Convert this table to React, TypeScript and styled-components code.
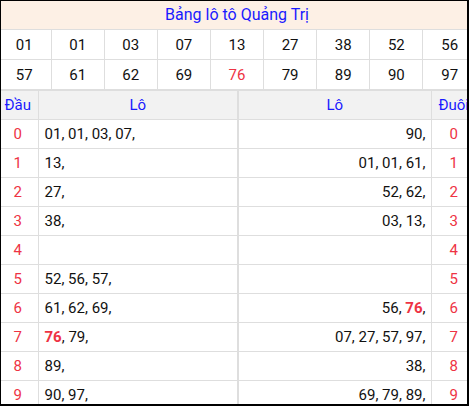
import React from 'react';
import styled, { createGlobalStyle } from 'styled-components';

const GlobalStyle = createGlobalStyle`
  html, body {
    margin: 0;
    padding: 0;
    background: #fff;
  }
  body {
    font-family: Roboto, 'Liberation Sans', Arial, sans-serif;
  }
`;

const prizes = [
  ['01', '01', '03', '07', '13', '27', '38', '52', '56'],
  ['57', '61', '62', '69', '76', '79', '89', '90', '97'],
];

const special = '76';

const heads: string[][] = [
  ['01', '01', '03', '07'],
  ['13'],
  ['27'],
  ['38'],
  [],
  ['52', '56', '57'],
  ['61', '62', '69'],
  ['76', '79'],
  ['89'],
  ['90', '97'],
];

const tails: string[][] = [
  ['90'],
  ['01', '01', '61'],
  ['52', '62'],
  ['03', '13'],
  [],
  [],
  ['56', '76'],
  ['07', '27', '57', '97'],
  ['38'],
  ['69', '79', '89'],
];

const LotoList: React.FC<{ items: string[] }> = ({ items }) => (
  <>
    {items.map((n, i) => (
      <React.Fragment key={i}>
        {i > 0 && ' '}
        {n === special ? <Hot>{n}</Hot> : n}
        ,
      </React.Fragment>
    ))}
  </>
);

export default function App() {
  return (
    <>
      <GlobalStyle />
      <Frame>
        <Board>
          <Title>Bảng lô tô Quảng Trị</Title>
          <PrizeTable>
            <tbody>
              {prizes.map((row, r) => (
                <tr key={r}>
                  {row.map((n, c) => (
                    <PrizeCell key={c} $hot={n === special}>
                      {n}
                    </PrizeCell>
                  ))}
                </tr>
              ))}
            </tbody>
          </PrizeTable>
          <LotoTable>
            <colgroup>
              <col style={{ width: 40 }} />
              <col style={{ width: 200 }} />
              <col style={{ width: 193 }} />
              <col style={{ width: 45 }} />
            </colgroup>
            <thead>
              <tr>
                <HeadCell>Đầu</HeadCell>
                <HeadCell $split>Lô</HeadCell>
                <HeadCell>Lô</HeadCell>
                <HeadCell>Đuôi</HeadCell>
              </tr>
            </thead>
            <tbody>
              {heads.map((h, i) => (
                <tr key={i}>
                  <DigitCell>{i}</DigitCell>
                  <NumCell $split>
                    <LotoList items={h} />
                  </NumCell>
                  <NumCell $right>
                    <LotoList items={tails[i]} />
                  </NumCell>
                  <DigitCell>{i}</DigitCell>
                </tr>
              ))}
            </tbody>
          </LotoTable>
        </Board>
      </Frame>
    </>
  );
}

const Frame = styled.div`
  box-sizing: border-box;
  width: 469px;
  height: 406px;
  overflow: hidden;
  border: 1px solid #000;
  border-right-width: 2px;
  border-bottom-width: 2px;
`;

const Board = styled.div`
  width: 478px;
  margin-left: -3px;
`;

const Title = styled.div`
  height: 28px;
  line-height: 28px;
  background: #fdf0e5;
  color: #1a1aff;
  text-align: center;
  font-size: 16px;
  border-bottom: 1px solid #dedede;
`;

const PrizeTable = styled.table`
  width: 100%;
  table-layout: fixed;
  border-collapse: collapse;
  border-bottom: 2px solid #dedede;
`;

const PrizeCell = styled.td<{ $hot?: boolean }>`
  height: 29px;
  padding: 0;
  text-align: center;
  font-size: 15px;
  color: ${({ $hot }) => ($hot ? '#ee3344' : '#111')};
  border-right: 1px solid #dedede;
  border-bottom: 1px solid #dedede;
  tr:last-child > & {
    border-bottom: none;
  }
  &:last-child {
    border-right: none;
  }
`;

const LotoTable = styled.table`
  width: 100%;
  table-layout: fixed;
  border-collapse: collapse;
`;

const HeadCell = styled.th<{ $split?: boolean }>`
  height: 28px;
  padding: 0;
  background: #f2f2f2;
  color: #1a1aff;
  font-size: 15px;
  font-weight: 400;
  text-align: center;
  white-space: nowrap;
  border-bottom: 1px solid #dedede;
  border-right: ${({ $split }) => ($split ? '2px' : '1px')} solid #dedede;
  &:last-child {
    border-right: none;
  }
`;

const DigitCell = styled.td`
  height: 28px;
  padding: 0;
  text-align: center;
  font-size: 15px;
  color: #ee3344;
  border-bottom: 1px solid #dedede;
  border-right: 1px solid #dedede;
  &:last-child {
    border-right: none;
  }
`;

const NumCell = styled.td<{ $split?: boolean; $right?: boolean }>`
  height: 28px;
  padding: 0 5px 0 6px;
  font-size: 15px;
  color: #111;
  white-space: nowrap;
  text-align: ${({ $right }) => ($right ? 'right' : 'left')};
  border-bottom: 1px solid #dedede;
  border-right: ${({ $split }) => ($split ? '2px' : '1px')} solid #dedede;
`;

const Hot = styled.b`
  color: #ee3344;
  font-weight: 700;
`;
